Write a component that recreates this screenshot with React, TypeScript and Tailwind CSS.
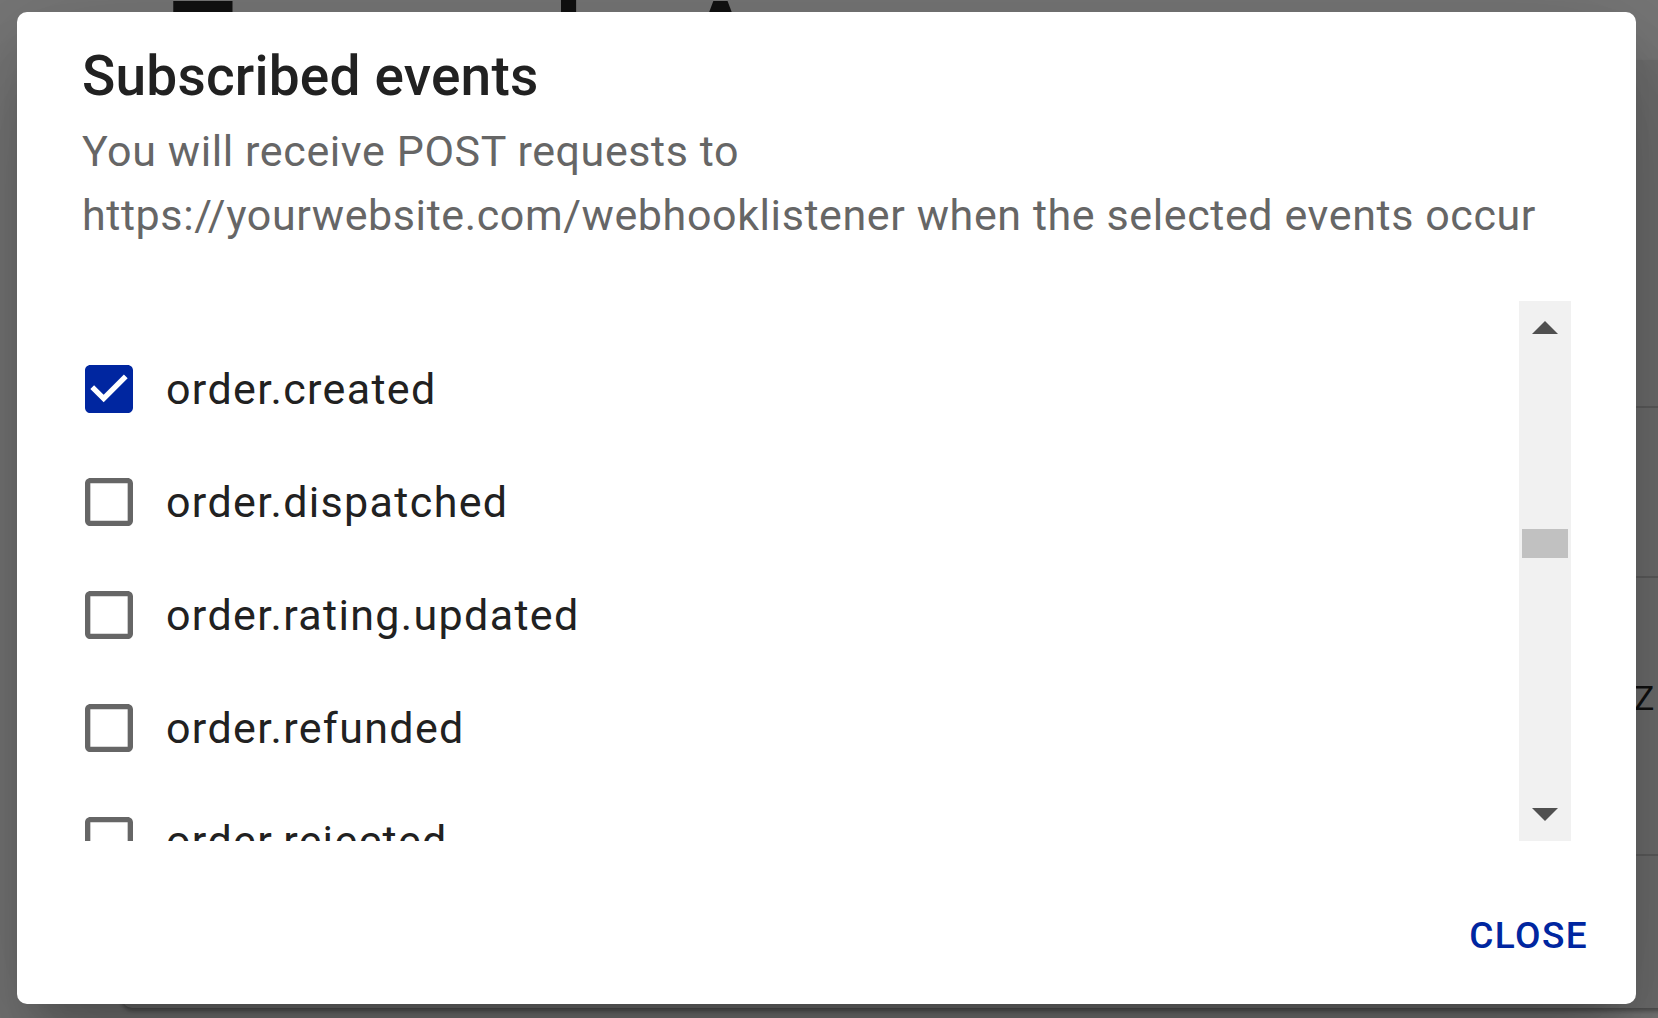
import { useState } from 'react';

const EVENTS = [
  'order.created',
  'order.dispatched',
  'order.rating.updated',
  'order.refunded',
  'order.rejected',
  'order.cancelled',
  'order.delivered',
];

const BLUE = '#0026a0';

function CheckIcon({ checked }: { checked: boolean }) {
  // MUI-style checkbox glyphs, drawn at 64px
  return (
    <svg viewBox="0 0 24 24" className="w-[64px] h-[64px] shrink-0">
      {checked ? (
        <path
          fill={BLUE}
          d="M19 3H5c-1.11 0-2 .9-2 2v14c0 1.1.89 2 2 2h14c1.11 0 2-.9 2-2V5c0-1.1-.89-2-2-2zm-9 14l-5-5 1.41-1.41L10 14.17l7.59-7.59L19 8l-9 9z"
        />
      ) : (
        <path
          fill="#666666"
          d="M19 5v14H5V5h14m0-2H5c-1.1 0-2 .9-2 2v14c0 1.1.9 2 2 2h14c1.1 0 2-.9 2-2V5c0-1.1-.9-2-2-2z"
        />
      )}
    </svg>
  );
}

function Scrollbar() {
  return (
    <div className="relative w-[52px] h-full bg-[#f1f1f1] flex flex-col items-center justify-between py-[20px]">
      <svg width="26" height="13" viewBox="0 0 26 13">
        <polygon points="13,0 26,13 0,13" fill="#505050" />
      </svg>
      <div className="absolute left-[3px] top-[228px] w-[46px] h-[29px] bg-[#c1c1c1]" />
      <svg width="26" height="13" viewBox="0 0 26 13">
        <polygon points="0,0 26,0 13,13" fill="#505050" />
      </svg>
    </div>
  );
}

export default function App() {
  const [selected, setSelected] = useState<string[]>(['order.created']);

  const toggle = (name: string) => {
    setSelected(prev =>
      prev.includes(name) ? prev.filter(n => n !== name) : [...prev, name]
    );
  };

  return (
    <div
      className="relative w-[1658px] h-[1018px] overflow-hidden bg-[#777777]"
      style={{ fontFamily: 'Roboto, "Noto Sans", sans-serif' }}
    >
      {/* page underneath the backdrop */}
      <div className="absolute left-0 top-0 w-full h-[12px] overflow-hidden">
        <div className="flex pl-[164px] -mt-[16px] text-[#111111] text-[128px] leading-none font-medium">
          <span>E</span>
          <span className="ml-[316px]">l</span>
          <span className="ml-[93px]">A</span>
        </div>
      </div>
      <div className="absolute left-[122px] top-[60px] w-[1600px] h-[948px] bg-[#6f6f6f] shadow-[0_3px_4px_rgba(0,0,0,0.35)] rounded-[10px]">
        <div className="absolute left-0 right-0 top-[346px] h-[2px] bg-[#5e5e5e]" />
        <div className="absolute left-0 right-0 top-[516px] h-[2px] bg-[#5e5e5e]" />
        <div className="absolute left-[1512px] top-[621px] text-[34px] leading-none text-[#111111] tracking-[2px]">ZI</div>
        <div className="absolute left-0 right-0 top-[794px] h-[2px] bg-[#5e5e5e]" />
      </div>

      {/* dialog */}
      <div className="absolute left-[17px] top-[12px] w-[1619px] h-[992px] bg-white rounded-[10px] flex flex-col shadow-[0_29px_40px_-19px_rgba(0,0,0,0.2),0_64px_101px_8px_rgba(0,0,0,0.14),0_24px_123px_21px_rgba(0,0,0,0.12)]">
        <h2 className="px-[65px] pt-[32px] text-[55px] leading-[64px] font-medium tracking-[0.2px] text-[#212121]">
          Subscribed events
        </h2>
        <p className="px-[65px] mt-[11px] text-[43px] leading-[64px] tracking-[0.6px] text-[#666666]">
          You will receive POST requests to
          <br />
          https://yourwebsite.com/webhooklistener when the selected events occur
        </p>

        <div className="mt-[54px] ml-[65px] mr-[65px] h-[540px] flex">
          <div className="flex-1 overflow-hidden pt-[31px]">
            {EVENTS.map(name => (
              <label
                key={name}
                className="h-[113px] flex items-center cursor-pointer"
                onClick={() => toggle(name)}
              >
                <span className="-ml-[5px]">
                  <CheckIcon checked={selected.includes(name)} />
                </span>
                <span className="ml-[25px] text-[43px] leading-[64px] tracking-[1.35px] text-[#212121]">
                  {name}
                </span>
              </label>
            ))}
          </div>
          <Scrollbar />
        </div>

        <div className="mt-[62px] flex justify-end pr-[48px]">
          <button
            className="text-[37px] leading-[66px] font-medium uppercase tracking-[1.4px]"
            style={{ color: BLUE }}
          >
            Close
          </button>
        </div>
      </div>
    </div>
  );
}
